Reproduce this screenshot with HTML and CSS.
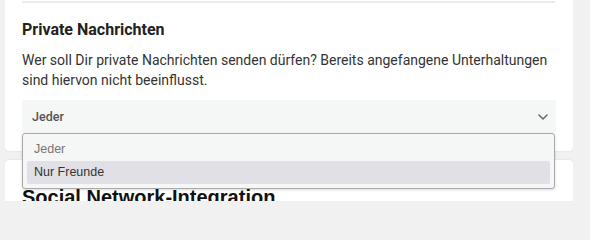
FILE: index.html
```html
<!DOCTYPE html>
<html lang="de">
<head>
<meta charset="utf-8">
<link rel="stylesheet" href="styles.css">
</head>
<body>
<div class="page">
  <section class="card card-first">
    <hr class="divider">
    <h2 class="title">Private Nachrichten</h2>
    <p class="desc">Wer soll Dir private Nachrichten senden dürfen? Bereits angefangene Unterhaltungen sind hiervon nicht beeinflusst.</p>
    <div class="select-wrap">
      <div class="select">
        <span class="select-value">Jeder</span>
        <svg class="chevron" width="10" height="6" viewBox="0 0 10 6"><path d="M1 1 L5 5 L9 1" fill="none" stroke="#6b6b6b" stroke-width="1.6" stroke-linecap="round" stroke-linejoin="round"/></svg>
      </div>
      <ul class="dropdown">
        <li class="option option-muted">Jeder</li>
        <li class="option option-active">Nur Freunde</li>
      </ul>
    </div>
  </section>
  <section class="card card-second">
    <h2 class="big-title">Social Network-Integration</h2>
  </section>
</div>
</body>
</html>
```
FILE: styles.css
```css
html, body {
  margin: 0;
  padding: 0;
  background: #f1f1f1;
  overflow: hidden;
}
body {
  height: 201px;
}
.page {
  width: 568px;
  height: 201px;
  overflow: hidden;
  margin-left: 5px;
  display: flex;
  flex-direction: column;
  gap: 9px;
}
.card {
  background: #ffffff;
  border-radius: 4px;
  box-shadow: 0 0 2px rgba(0,0,0,0.12);
  padding: 0 17px 0 17px;
}
.card-first {
  border-top-left-radius: 0;
  border-top-right-radius: 0;
  padding-top: 1px;
  padding-bottom: 18px;
  position: relative;
  z-index: 2;
}
.divider {
  margin: 0 1px 0 0;
  border: 0;
  height: 2px;
  background: #ebebeb;
}
.title {
  margin: 17px 0 0 0;
  font-family: Roboto, "Liberation Sans", sans-serif;
  font-weight: 700;
  font-size: 16px;
  line-height: 20px;
  color: #222;
}
.desc {
  margin: 10px 0 0 0;
  font-family: Roboto, "Liberation Sans", sans-serif;
  font-size: 14px;
  line-height: 20px;
  color: #333;
}
.select-wrap {
  position: relative;
  margin-top: 10px;
}
.select {
  height: 33px;
  background: #f5f6f6;
  border-radius: 3px;
  display: flex;
  align-items: center;
  justify-content: space-between;
  padding: 0 8px 0 10px;
}
.select-value {
  font-family: Roboto, "Liberation Sans", sans-serif;
  font-weight: 500;
  font-size: 12.5px;
  color: #555;
}
.chevron {
  display: block;
}
.dropdown {
  position: absolute;
  top: 33px;
  left: 0;
  width: 523px;
  margin: 0;
  padding: 4px;
  list-style: none;
  background: #f5f6f6;
  border: 1px solid #a9a9a9;
  border-radius: 3px;
  box-shadow: 0 1px 3px rgba(0,0,0,0.15);
  z-index: 5;
}
.option {
  height: 23px;
  line-height: 23px;
  padding-left: 7px;
  font-family: "Liberation Sans", Arial, sans-serif;
  font-size: 12.5px;
  color: #333;
  border-radius: 2px;
}
.option-muted {
  color: #757575;
}
.option-active {
  background: #e1e0e6;
}
.card-second {
  flex: 1;
  padding-top: 26px;
  border-bottom-left-radius: 0;
  border-bottom-right-radius: 0;
  overflow: hidden;
}
.big-title {
  margin: 0;
  font-family: "Liberation Sans", Arial, sans-serif;
  font-weight: 700;
  font-size: 20px;
  line-height: 23px;
  color: #111;
}
```
